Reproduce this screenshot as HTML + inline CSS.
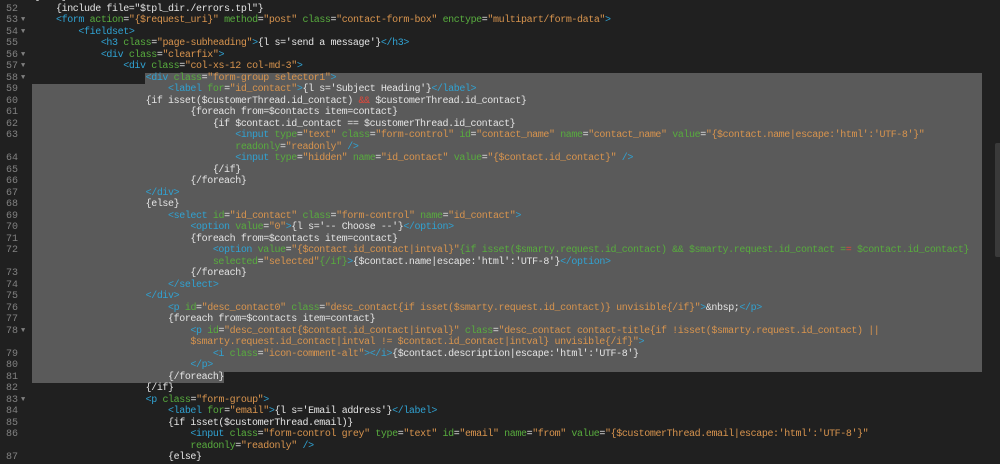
<!DOCTYPE html>
<html><head><meta charset="utf-8"><style>
body{margin:0;width:1000px;height:463px;overflow:hidden;background:#202020;font-family:"Liberation Mono",monospace;font-size:10px;letter-spacing:-0.4px;color:#e4e4e4;position:relative}
.sel{position:absolute;background:#5a5a5a}
.r{position:absolute;left:0;height:11.5px;line-height:11.5px;white-space:pre;width:1000px}
.n{position:absolute;right:982px;color:#808080;text-align:right;letter-spacing:0}
.f{position:absolute;left:21px;color:#808080;font-size:7px}
.c{position:absolute;left:33.6px}
.t{color:#30a2d2}.a{color:#58ac3e}.s{color:#d8944e}.x{color:#e0483c}
</style></head><body>
<div class="sel" style="left:145px;top:72.75px;width:837px;height:11.5px"></div>
<div class="sel" style="left:32px;top:84.25px;width:950px;height:287.5px"></div>
<div class="sel" style="left:32px;top:371.75px;width:192px;height:11.5px"></div>
<div style="position:absolute;left:995px;top:143px;width:5px;height:114px;background:#3a3a3a;border-radius:2px 0 0 2px"></div>
<div id="code"></div>
<script>
var L=[
["51","","{else}"],
["52","","    {include file=\"$tpl_dir./errors.tpl\"}"],
["53","v",'    <t>&lt;form</t> <a>action</a>=<s>"{$request_uri}"</s> <a>method</a>=<s>"post"</s> <a>class</a>=<s>"contact-form-box"</s> <a>enctype</a>=<s>"multipart/form-data"</s><t>&gt;</t>'],
["54","v",'        <t>&lt;fieldset&gt;</t>'],
["55","",'            <t>&lt;h3</t> <a>class</a>=<s>"page-subheading"</s><t>&gt;</t>{l s=\'send a message\'}<t>&lt;/h3&gt;</t>'],
["56","v",'            <t>&lt;div</t> <a>class</a>=<s>"clearfix"</s><t>&gt;</t>'],
["57","v",'                <t>&lt;div</t> <a>class</a>=<s>"col-xs-12 col-md-3"</s><t>&gt;</t>'],
["58","v",'                    <t>&lt;div</t> <a>class</a>=<s>"form-group selector1"</s><t>&gt;</t>'],
["59","",'                        <t>&lt;label</t> <a>for</a>=<s>"id_contact"</s><t>&gt;</t>{l s=\'Subject Heading\'}<t>&lt;/label&gt;</t>'],
["60","",'                    {if isset($customerThread.id_contact) <x>&amp;&amp;</x> $customerThread.id_contact}'],
["61","",'                            {foreach from=$contacts item=contact}'],
["62","",'                                {if $contact.id_contact == $customerThread.id_contact}'],
["63","",'                                    <t>&lt;input</t> <a>type</a>=<s>"text"</s> <a>class</a>=<s>"form-control"</s> <a>id</a>=<s>"contact_name"</s> <a>name</a>=<s>"contact_name"</s> <a>value</a>=<s>"{$contact.name|escape:\'html\':\'UTF-8\'}"</s>'],
["","",'                                    <a>readonly</a>=<s>"readonly"</s> <t>/&gt;</t>'],
["64","",'                                    <t>&lt;input</t> <a>type</a>=<s>"hidden"</s> <a>name</a>=<s>"id_contact"</s> <a>value</a>=<s>"{$contact.id_contact}"</s> <t>/&gt;</t>'],
["65","",'                                {/if}'],
["66","",'                            {/foreach}'],
["67","",'                    <t>&lt;/div&gt;</t>'],
["68","",'                    {else}'],
["69","",'                        <t>&lt;select</t> <a>id</a>=<s>"id_contact"</s> <a>class</a>=<s>"form-control"</s> <a>name</a>=<s>"id_contact"</s><t>&gt;</t>'],
["70","",'                            <t>&lt;option</t> <a>value</a>=<s>"0"</s><t>&gt;</t>{l s=\'-- Choose --\'}<t>&lt;/option&gt;</t>'],
["71","",'                            {foreach from=$contacts item=contact}'],
["72","",'                                <t>&lt;option</t> <a>value</a>=<s>"{$contact.id_contact|intval}"</s><a>{if isset($smarty.request.id_contact) &amp;&amp; $smarty.request.id_contact =</a><x>=</x> <a>$contact.id_contact}</a>'],
["","",'                                <a>selected</a>=<s>"selected"</s><a>{/if}</a><t>&gt;</t>{$contact.name|escape:\'html\':\'UTF-8\'}<t>&lt;/option&gt;</t>'],
["73","",'                            {/foreach}'],
["74","",'                        <t>&lt;/select&gt;</t>'],
["75","",'                    <t>&lt;/div&gt;</t>'],
["76","",'                        <t>&lt;p</t> <a>id</a>=<s>"desc_contact0"</s> <a>class</a>=<s>"desc_contact{if isset($smarty.request.id_contact)} unvisible{/if}"</s><t>&gt;</t>&amp;nbsp;<t>&lt;/p&gt;</t>'],
["77","",'                        {foreach from=$contacts item=contact}'],
["78","v",'                            <t>&lt;p</t> <a>id</a>=<s>"desc_contact{$contact.id_contact|intval}"</s> <a>class</a>=<s>"desc_contact contact-title{if !isset($smarty.request.id_contact) ||</s>'],
["","",'                            <s>$smarty.request.id_contact|intval != $contact.id_contact|intval} unvisible{/if}"</s><t>&gt;</t>'],
["79","",'                                <t>&lt;i</t> <a>class</a>=<s>"icon-comment-alt"</s><t>&gt;&lt;/i&gt;</t>{$contact.description|escape:\'html\':\'UTF-8\'}'],
["80","",'                            <t>&lt;/p&gt;</t>'],
["81","",'                        {/foreach}'],
["82","",'                    {/if}'],
["83","v",'                    <t>&lt;p</t> <a>class</a>=<s>"form-group"</s><t>&gt;</t>'],
["84","",'                        <t>&lt;label</t> <a>for</a>=<s>"email"</s><t>&gt;</t>{l s=\'Email address\'}<t>&lt;/label&gt;</t>'],
["85","",'                        {if isset($customerThread.email)}'],
["86","",'                            <t>&lt;input</t> <a>class</a>=<s>"form-control grey"</s> <a>type</a>=<s>"text"</s> <a>id</a>=<s>"email"</s> <a>name</a>=<s>"from"</s> <a>value</a>=<s>"{$customerThread.email|escape:\'html\':\'UTF-8\'}"</s>'],
["","",'                            <a>readonly</a>=<s>"readonly"</s> <t>/&gt;</t>'],
["87","",'                        {else}']
];
var h='';
L.forEach(function(l,i){
 var c=l[2].replace(/<t>/g,'<span class="t">').replace(/<a>/g,'<span class="a">').replace(/<s>/g,'<span class="s">').replace(/<x>/g,'<span class="x">').replace(/<\/[tasx]>/g,'</span>');
 h+='<div class="r" style="top:'+(-7.75+i*11.5)+'px"><span class="n">'+l[0]+'</span>'+(l[1]?'<span class="f">&#9660;</span>':'')+'<span class="c">'+c+'</span></div>';
});
document.getElementById('code').innerHTML=h;
</script>
</body></html>
